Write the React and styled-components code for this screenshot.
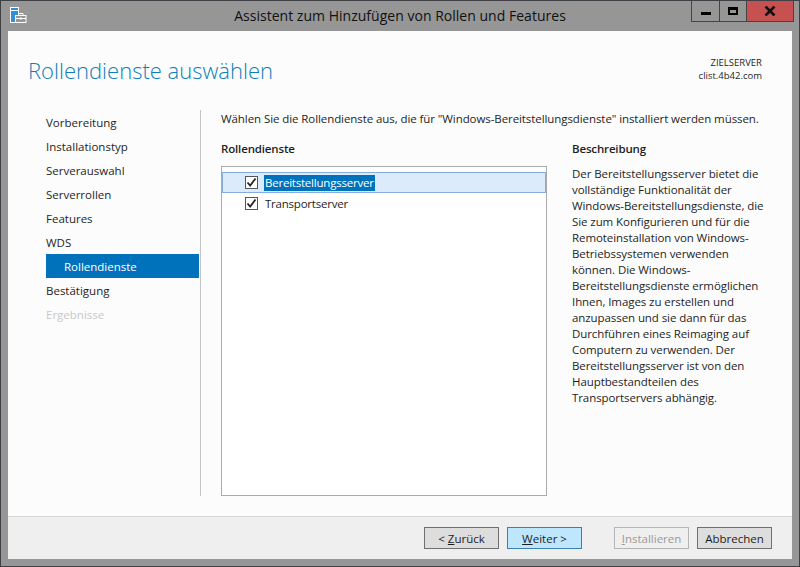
import React from 'react';
import styled, { createGlobalStyle } from 'styled-components';

const GlobalStyle = createGlobalStyle`
  html, body {
    margin: 0;
    padding: 0;
    background: #969696;
  }
  body {
    font-family: "Open Sans", "Noto Sans", sans-serif;
    font-size: 11.5px;
    color: #1e1e1e;
  }
`;

const steps = [
  { label: 'Vorbereitung' },
  { label: 'Installationstyp' },
  { label: 'Serverauswahl' },
  { label: 'Serverrollen' },
  { label: 'Features' },
  { label: 'WDS' },
  { label: 'Rollendienste', active: true },
  { label: 'Bestätigung' },
  { label: 'Ergebnisse', disabled: true },
];

const services = ['Bereitstellungsserver', 'Transportserver'];

const AppIcon = () => (
  <svg width="17" height="17" viewBox="0 0 17 17" fill="none">
    <rect x="0.5" y="0.5" width="8" height="15" fill="#2f8fd8" stroke="#fff" />
    <rect x="1" y="3" width="7" height="1" fill="#fff" />
    <rect x="5.5" y="8.5" width="10.5" height="7" fill="#969696" stroke="#fff" />
    <path d="M8.5 8.5V6.5h4.5v2" stroke="#fff" />
    <path d="M5.5 11.5h10.5" stroke="#fff" />
    <rect x="10" y="10.5" width="1.5" height="2" fill="#fff" />
  </svg>
);

const CheckMark = () => (
  <svg width="11" height="11" viewBox="0 0 11 11" fill="none">
    <path d="M1.5 5.5L4.2 8.5L9.5 1.5" stroke="#222" strokeWidth="1.8" />
  </svg>
);

const App = () => {
  return (
    <>
      <GlobalStyle />
      <StWindow>
        <StTitleBar>
          <StIconSlot>
            <AppIcon />
          </StIconSlot>
          <StTitle>Assistent zum Hinzufügen von Rollen und Features</StTitle>
          <StControls>
            <StControl $width={27}>
              <StMinGlyph />
            </StControl>
            <StControl $width={26}>
              <StMaxGlyph />
            </StControl>
            <StControl $width={46} $close>
              <svg width="12" height="10" viewBox="0 0 12 10">
                <path d="M1.5 0.5L10.5 9.5M10.5 0.5L1.5 9.5" stroke="#111" strokeWidth="2.6" />
              </svg>
            </StControl>
          </StControls>
        </StTitleBar>

        <StClient>
          <StHead>
            <StHeading>Rollendienste auswählen</StHeading>
            <StServer>
              <div>ZIELSERVER</div>
              <div>clist.4b42.com</div>
            </StServer>
          </StHead>

          <StBody>
            <StNav>
              {steps.map(step => (
                <StNavItem key={step.label} $active={step.active} $disabled={step.disabled}>
                  {step.label}
                </StNavItem>
              ))}
            </StNav>

            <StMain>
              <StIntro>
                Wählen Sie die Rollendienste aus, die für "Windows-Bereitstellungsdienste" installiert werden müssen.
              </StIntro>
              <StColumns>
                <StListColumn>
                  <StLabel>Rollendienste</StLabel>
                  <StListBox>
                    {services.map((name, i) => (
                      <StRow key={name} $selected={i === 0}>
                        <StCheckbox>
                          <CheckMark />
                        </StCheckbox>
                        <StRowText $selected={i === 0}>{name}</StRowText>
                      </StRow>
                    ))}
                  </StListBox>
                </StListColumn>
                <StDescColumn>
                  <StLabel>Beschreibung</StLabel>
                  <StDescText>
                    Der Bereitstellungsserver bietet die
                    <br />
                    vollständige Funktionalität der
                    <br />
                    Windows-Bereitstellungsdienste, die
                    <br />
                    Sie zum Konfigurieren und für die
                    <br />
                    Remoteinstallation von Windows-
                    <br />
                    Betriebssystemen verwenden
                    <br />
                    können. Die Windows-
                    <br />
                    Bereitstellungsdienste ermöglichen
                    <br />
                    Ihnen, Images zu erstellen und
                    <br />
                    anzupassen und sie dann für das
                    <br />
                    Durchführen eines Reimaging auf
                    <br />
                    Computern zu verwenden. Der
                    <br />
                    Bereitstellungsserver ist von den
                    <br />
                    Hauptbestandteilen des
                    <br />
                    Transportservers abhängig.
                  </StDescText>
                </StDescColumn>
              </StColumns>
            </StMain>
          </StBody>

          <StFooter>
            <StButton>
              &lt; <u>Z</u>urück
            </StButton>
            <StButton $primary>
              <u>W</u>eiter &gt;
            </StButton>
            <StButton $disabled $gapLeft>
              <u>I</u>nstallieren
            </StButton>
            <StButton>Abbrechen</StButton>
          </StFooter>
        </StClient>
      </StWindow>
    </>
  );
};

export default App;

const StWindow = styled.div`
  box-sizing: border-box;
  width: 800px;
  height: 567px;
  display: flex;
  flex-direction: column;
  background: #969696;
  border: 1px solid #3f3f46;
  padding: 0 7px 7px;
  overflow: hidden;
`;

const StTitleBar = styled.div`
  position: relative;
  height: 30px;
  flex: none;
  display: flex;
  align-items: flex-start;
  justify-content: center;
`;

const StIconSlot = styled.div`
  position: absolute;
  left: 2px;
  top: 6px;
  display: flex;
`;

const StTitle = styled.div`
  font-size: 14px;
  line-height: 30px;
  color: #111;
  letter-spacing: 0.02px;
`;

const StControls = styled.div`
  position: absolute;
  right: -2px;
  top: -1px;
  display: flex;
  height: 22px;
  border: 1px solid #444;
  border-top: 0;
  box-sizing: border-box;
`;

const StControl = styled.div`
  box-sizing: content-box;
  width: ${({ $width }) => $width}px;
  display: flex;
  align-items: center;
  justify-content: center;
  background: ${({ $close }) => ($close ? '#c75050' : '#969696')};
  & + & {
    border-left: 1px solid #444;
  }
`;

const StMinGlyph = styled.div`
  width: 10px;
  height: 3px;
  margin-top: 6px;
  background: #000;
`;

const StMaxGlyph = styled.div`
  box-sizing: border-box;
  width: 10px;
  height: 8px;
  border: 2px solid #000;
  border-top-width: 3px;
`;

const StClient = styled.div`
  flex: 1;
  min-height: 0;
  display: flex;
  flex-direction: column;
  background: #fcfcfc;
`;

const StHead = styled.div`
  height: 79px;
  flex: none;
  box-sizing: border-box;
  padding: 0 30px 0 20px;
  display: flex;
  justify-content: space-between;
  align-items: flex-start;
`;

const StHeading = styled.h1`
  margin: 21px 0 0;
  font-size: 22px;
  font-weight: 300;
  line-height: 36px;
  color: #0f7fb5;
`;

const StServer = styled.div`
  margin-top: 25px;
  text-align: right;
  font-size: 9.5px;
  line-height: 13px;
  color: #1e1e1e;
`;

const StBody = styled.div`
  flex: 1;
  min-height: 0;
  display: flex;
  padding-left: 38px;
`;

const StNav = styled.div`
  width: 153px;
  height: 386px;
  flex: none;
  padding-right: 1px;
  border-right: 1px solid #c4c4c4;
`;

const StNavItem = styled.div`
  height: 24px;
  line-height: 26px;
  padding-left: ${({ $active }) => ($active ? '18px' : '0')};
  background: ${({ $active }) => ($active ? '#0072bc' : 'transparent')};
  color: ${({ $active, $disabled }) => ($active ? '#fff' : $disabled ? '#c8c8c8' : '#1e1e1e')};
`;

const StMain = styled.div`
  flex: 1;
  min-width: 0;
  padding: 1px 20px 0;
`;

const StIntro = styled.div`
  height: 30px;
  line-height: 16px;
  white-space: nowrap;
  letter-spacing: -0.08px;
`;

const StColumns = styled.div`
  display: flex;
  gap: 25px;
`;

const StListColumn = styled.div`
  width: 326px;
  flex: none;
`;

const StDescColumn = styled.div`
  flex: 1;
  min-width: 0;
`;

const StLabel = styled.div`
  font-weight: 600;
  line-height: 16px;
  height: 25px;
  letter-spacing: -0.15px;
`;

const StListBox = styled.div`
  box-sizing: border-box;
  height: 330px;
  background: #fff;
  border: 1px solid #ababab;
  padding-top: 5px;
`;

const StRow = styled.div`
  box-sizing: border-box;
  height: 21px;
  display: flex;
  align-items: center;
  padding-left: 22px;
  border: 1px solid ${({ $selected }) => ($selected ? '#84acdd' : 'transparent')};
  background: ${({ $selected }) => ($selected ? '#dcebfc' : 'transparent')};
`;

const StCheckbox = styled.div`
  box-sizing: border-box;
  width: 13px;
  height: 13px;
  border: 1px solid #555;
  background: #fff;
  display: flex;
  align-items: center;
  justify-content: center;
`;

const StRowText = styled.span`
  margin-left: 6px;
  padding: 0 1px;
  line-height: 16px;
  letter-spacing: -0.22px;
  background: ${({ $selected }) => ($selected ? '#0072bc' : 'transparent')};
  color: ${({ $selected }) => ($selected ? '#fff' : '#1e1e1e')};
`;

const StDescText = styled.div`
  line-height: 16px;
  white-space: nowrap;
  letter-spacing: -0.08px;
`;

const StFooter = styled.div`
  height: 43px;
  flex: none;
  box-sizing: border-box;
  background: #efefef;
  border-top: 1px solid #d6d6d6;
  padding: 10px 20px 0 0;
  display: flex;
  justify-content: flex-end;
  align-items: flex-start;
  gap: 8px;
`;

const StButton = styled.div`
  box-sizing: border-box;
  width: 75px;
  height: 22px;
  display: flex;
  align-items: center;
  justify-content: center;
  white-space: pre;
  margin-left: ${({ $gapLeft }) => ($gapLeft ? '24px' : '0')};
  border: 1px solid ${({ $primary, $disabled }) => ($primary ? '#3c7fb1' : $disabled ? '#b5b5b5' : '#707070')};
  background: ${({ $primary, $disabled }) => ($primary ? '#bee6fd' : $disabled ? '#efefef' : '#dddddd')};
  color: ${({ $disabled }) => ($disabled ? '#9a9a9a' : '#1e1e1e')};
`;
